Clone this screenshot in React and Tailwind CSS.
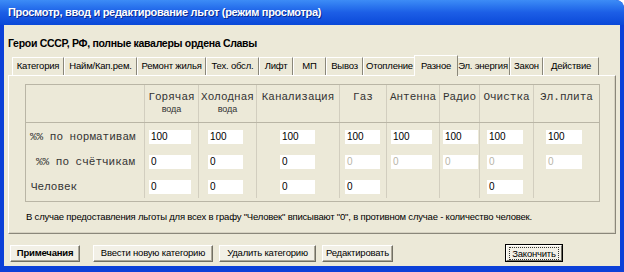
import React from "react";

const cols = [
  { title: "Горячая", sub: "вода", w: "w-[54px]", ml: "ml-[4px]", iw: "w-[42px]" },
  { title: "Холодная", sub: "вода", w: "w-[58px]", ml: "ml-[9px]", iw: "w-[35px]" },
  { title: "Канализация", w: "w-[83px]", ml: "ml-[23px]", iw: "w-[35px]" },
  { title: "Газ", w: "w-[47px]", ml: "ml-[5px]", iw: "w-[35px]" },
  { title: "Антенна", w: "w-[53px]", ml: "ml-[4px]", iw: "w-[41px]" },
  { title: "Радио", w: "w-[40px]", ml: "ml-[3px]", iw: "w-[35px]" },
  { title: "Очистка", w: "w-[54px]", ml: "ml-[7px]", iw: "w-[36px]" },
  { title: "Эл.плита", w: "w-[66px]", ml: "ml-[12px]", iw: "w-[36px]" },
];

// "~" = disabled field
const rows = [
  { label: "%% по нормативам", pl: "pl-[4px]", vals: ["100", "100", "100", "100", "100", "100", "100", "100"] },
  { label: "%% по счётчикам", pl: "pl-[10px]", vals: ["0", "0", "0", "~0", "~0", "~0", "~0", "~0"] },
  { label: "Человек", pl: "pl-[5px]", vals: ["0", "0", "0", "0", null, null, "0", null] },
];

const tabs = [
  { t: "Категория", w: "w-[52px]" },
  { t: "Найм/Кап.рем.", w: "w-[73px]" },
  { t: "Ремонт жилья", w: "w-[69px]" },
  { t: "Тех. обсл.", w: "w-[53px]" },
  { t: "Лифт", w: "w-[34px]" },
  { t: "МП", w: "w-[33px]" },
  { t: "Вывоз", w: "w-[37px]" },
  { t: "Отопление", w: "w-[53px]" },
  { t: "Разное", w: "w-[44px]", active: true },
  { t: "Эл. энергия", w: "w-[54px]" },
  { t: "Закон", w: "w-[33px]" },
  { t: "Действие", w: "w-[56px]" },
];

const btn =
  "h-[17px] flex items-center justify-center text-[9.5px] tracking-[-0.2px] text-black bg-[#f2f0e6] border border-t-white border-l-white border-r-[#716f64] border-b-[#716f64] shadow-[inset_-1px_-1px_0_#aca899]";

const Cell = ({ v, col }) => {
  if (v === null) return null;
  const off = v.startsWith("~");
  return (
    <div
      className={`${col.ml} ${col.iw} h-[14px] bg-white pl-[2px] text-[10px] leading-[14px] ${
        off ? "text-[#b8b5a8]" : "text-black"
      }`}
    >
      {off ? v.slice(1) : v}
    </div>
  );
};

export default function App() {
  return (
    <div className="w-[624px] h-[272px] bg-white font-['Liberation_Sans',Arial,sans-serif]">
      <div className="w-[624px] h-[272px] flex flex-col bg-[#0b40d8] rounded-tr-[8px] overflow-hidden">
        <div className="h-[25px] shrink-0 flex items-center pl-[8px] bg-gradient-to-b from-[#3d8cf6] via-[#1c5ee6] to-[#0a48d8] rounded-tr-[8px]">
          <span className="text-white font-bold text-[11px] tracking-[-0.3px] [text-shadow:1px_1px_0_#0a2a90]">
            Просмотр, ввод и редактирование льгот (режим просмотра)
          </span>
        </div>

        <div className="flex-1 mx-[4px] mb-[6px] bg-[#ece9d8] flex flex-col">
          <div className="pt-[11px] pl-[4px] h-[25px] text-[10.5px] tracking-[-0.3px] leading-[14px] font-bold text-black">
            Герои СССР, РФ, полные кавалеры ордена Славы
          </div>

          <div className="mt-[5px] h-[20px] flex items-end pl-[8px]">
            {tabs.map((tab) =>
              tab.active ? (
                <div
                  key={tab.t}
                  className={`${tab.w} -mx-[2px] h-[21px] relative z-10 -mb-[1px] bg-[#ece9d8] border-t border-l border-r border-t-white border-l-white border-r-[#8a877a] flex items-start pt-[3px] justify-center text-[9.5px] tracking-[-0.2px] text-black whitespace-nowrap`}
                >
                  {tab.t}
                </div>
              ) : (
                <div
                  key={tab.t}
                  className={`${tab.w} h-[18px] border-t border-l border-r border-t-white border-l-white border-r-[#8a877a] flex items-center justify-center text-[9.5px] tracking-[-0.2px] text-black whitespace-nowrap`}
                >
                  {tab.t}
                </div>
              )
            )}
          </div>

          <div className="mx-[4px] h-[159px] border border-t-white border-l-white border-r-[#8a877a] border-b-[#8a877a] shadow-[inset_-1px_-1px_0_#d6d2c2] pl-[16px] pt-[8px]">
            <div className="w-[575px] border border-[#b9b5a5] pb-[3px]">
              <div className="flex h-[38px] border-b border-[#b9b5a5]">
                <div className="w-[118px]" />
                {cols.map((c) => (
                  <div
                    key={c.title}
                    className={`${c.w} border-l border-[#d2cebf] flex flex-col items-center pt-[6px]`}
                  >
                    <span className="font-['Liberation_Mono',monospace] text-[11px] leading-[13px] text-[#333] whitespace-nowrap">
                      {c.title}
                    </span>
                    {c.sub && (
                      <span className="text-[9px] leading-[11px] text-[#333]">{c.sub}</span>
                    )}
                  </div>
                ))}
              </div>
              {rows.map((r) => (
                <div key={r.label} className="flex h-[25px]">
                  <div
                    className={`w-[118px] ${r.pl} pt-[7px] font-['Liberation_Mono',monospace] text-[11px] leading-[14px] text-[#333] whitespace-nowrap`}
                  >
                    {r.label}
                  </div>
                  {cols.map((c, i) => (
                    <div key={c.title} className={`${c.w} border-l border-[#d2cebf] pt-[7px]`}>
                      <Cell v={r.vals[i]} col={c} />
                    </div>
                  ))}
                </div>
              ))}
            </div>
            <div className="mt-[9px] pl-[1px] text-[9.5px] tracking-[-0.2px] leading-[12px] text-black whitespace-nowrap">
              В случае предоставления льготы для всех в графу "Человек" вписывают "0", в противном случае - количество человек.
            </div>
          </div>

          <div className="mt-[10px] pl-[6px] flex items-center">
            <div className={`${btn} w-[70px] font-bold`}>Примечания</div>
            <div className={`${btn} w-[120px] ml-[13px]`}>Ввести новую категорию</div>
            <div className={`${btn} w-[97px] ml-[6px]`}>Удалить категорию</div>
            <div className={`${btn} w-[71px] ml-[6px]`}>Редактировать</div>
            <div className="ml-[112px] w-[58px] h-[18px] border border-black flex">
              <div className="flex-1 flex items-center justify-center bg-[#f2f0e6] border border-t-white border-l-white border-r-[#716f64] border-b-[#716f64]">
                <span className="text-[9.5px] tracking-[-0.2px] leading-[11px] text-black outline outline-1 outline-dotted outline-[#333] px-[2px]">
                  Закончить
                </span>
              </div>
            </div>
          </div>
        </div>
      </div>
    </div>
  );
}
